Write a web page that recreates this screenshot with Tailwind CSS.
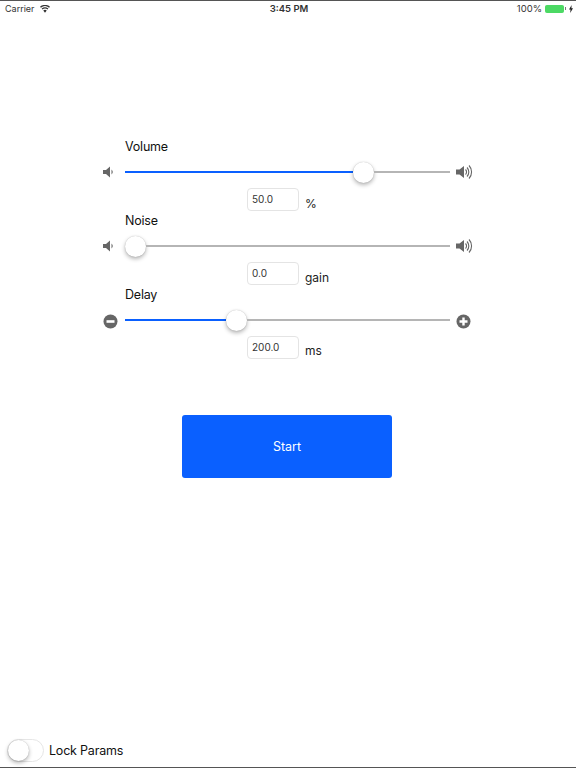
<!DOCTYPE html>
<html lang="en">
<head>
    <meta charset="UTF-8" />
    <meta content="width=device-width, initial-scale=1.0" name="viewport" />
    <title>Params</title>
    <script src="https://cdn.jsdelivr.net/npm/@tailwindcss/browser@4"></script>
</head>
<body class="bg-white text-black font-['Inter',sans-serif] overflow-hidden">
<div class="w-[576px] h-[768px] flex flex-col border-t border-b border-[#555]">
    <!-- status bar -->
    <div class="h-[15px] shrink-0 flex items-center justify-between pl-[5px] pr-[3px] text-[9px] leading-none text-[#333]">
        <div class="w-[180px] flex items-center gap-[5px]">
            <span>Carrier</span>
            <svg width="10" height="8" viewBox="0 0 11 8"><path d="M5.500 8 3.600 5.600a3 3 0 0 1 3.800 0zM2.700 4.600 1.800 3.500a5.800 5.800 0 0 1 7.400 0L8.300 4.600a4.400 4.400 0 0 0-5.600 0zM1 2.600 0 1.500a8.400 8.400 0 0 1 11 0L10 2.600a7 7 0 0 0-9 0z" fill="#333"/></svg>
        </div>
        <span class="font-semibold text-[9.500px]">3:45 PM</span>
        <div class="w-[180px] flex items-center justify-end gap-[2px]">
            <span class="text-[9.500px] mr-[1px]">100%</span>
            <div class="w-[19px] h-[8px] bg-[#4cd964] rounded-[1.500px] border border-[#4cd964]"></div>
            <div class="w-[1px] h-[3px] -ml-[1px] bg-[#777]"></div>
            <svg class="ml-[1px]" width="4" height="8" viewBox="0 0 4 8"><path d="M2.600 0 0 4.600h1.500L1.200 8 4 3.300H2.400z" fill="#222"/></svg>
        </div>
    </div>

    <!-- Volume -->
    <section class="mt-[121px]">
        <div class="h-[19px] pl-[125px] text-[12.500px] tracking-[-0.2px] leading-[19px] text-[#111]">Volume</div>
        <div class="h-[32px] flex items-center">
            <div class="w-[125px] pl-[103px] shrink-0">
                <svg width="12" height="12" viewBox="0 0 12 12"><path d="M0 4h3l4-3.500v11L3 8H0z M8.500 3.500a3.500 3.500 0 0 1 0 5z" fill="#666"/></svg>
            </div>
            <div class="w-[325px] flex items-center">
                <div class="w-[228px] h-[2px] bg-[#0a60ff]"></div>
                <div class="w-[21px] h-[21px] shrink-0 rounded-full bg-white shadow-[0_2px_4px_rgba(0,0,0,0.3),0_0_1px_rgba(0,0,0,0.25)]"></div>
                <div class="flex-1 h-[2px] bg-[#b5b5b5]"></div>
            </div>
            <svg class="ml-[5px]" width="18" height="16" viewBox="0 0 18 16"><path d="M1 5.500h3.500L9 2v12l-4.500-3.500H1z" fill="#666"/><path d="M10.500 5.500a3.500 3.500 0 0 1 0 5M12 3.500a6.500 6.500 0 0 1 0 9M14 1.500a9.500 9.500 0 0 1 0 13" fill="none" stroke="#666" stroke-width="1.100"/></svg>
        </div>
        <div class="h-[23px] flex pl-[247px]">
            <div class="w-[52px] h-[23px] border border-[#e4e4e4] rounded-[4px] pl-[4px] text-[10px] leading-[20px] text-[#333]">50.0</div>
            <span class="ml-[6px] mt-[8px] text-[12px] leading-[16px] text-[#222]">%</span>
        </div>
    </section>

    <!-- Noise -->
    <section>
        <div class="h-[19px] pl-[125px] text-[12.500px] tracking-[-0.2px] leading-[19px] text-[#111]">Noise</div>
        <div class="h-[32px] flex items-center">
            <div class="w-[125px] pl-[103px] shrink-0">
                <svg width="12" height="12" viewBox="0 0 12 12"><path d="M0 4h3l4-3.500v11L3 8H0z M8.500 3.500a3.500 3.500 0 0 1 0 5z" fill="#666"/></svg>
            </div>
            <div class="w-[325px] flex items-center">
                <div class="w-[21px] h-[21px] shrink-0 rounded-full bg-white shadow-[0_2px_4px_rgba(0,0,0,0.3),0_0_1px_rgba(0,0,0,0.25)]"></div>
                <div class="flex-1 h-[2px] bg-[#b5b5b5]"></div>
            </div>
            <svg class="ml-[5px]" width="18" height="16" viewBox="0 0 18 16"><path d="M1 5.500h3.500L9 2v12l-4.500-3.500H1z" fill="#666"/><path d="M10.500 5.500a3.500 3.500 0 0 1 0 5M12 3.500a6.500 6.500 0 0 1 0 9M14 1.500a9.500 9.500 0 0 1 0 13" fill="none" stroke="#666" stroke-width="1.100"/></svg>
        </div>
        <div class="h-[23px] flex pl-[247px]">
            <div class="w-[52px] h-[23px] border border-[#e4e4e4] rounded-[4px] pl-[4px] text-[10px] leading-[20px] text-[#333]">0.0</div>
            <span class="ml-[6px] mt-[8px] text-[12px] leading-[16px] text-[#222]">gain</span>
        </div>
    </section>

    <!-- Delay -->
    <section>
        <div class="h-[19px] pl-[125px] text-[12.500px] tracking-[-0.2px] leading-[19px] text-[#111]">Delay</div>
        <div class="h-[32px] flex items-center">
            <div class="w-[125px] pl-[103px] shrink-0">
                <svg class="mt-[2px]" width="15" height="15" viewBox="0 0 15 15"><circle cx="7.500" cy="7.500" r="7" fill="#666"/><rect x="3.500" y="6.200" width="8" height="2.600" fill="#fff"/></svg>
            </div>
            <div class="w-[325px] flex items-center">
                <div class="w-[101px] h-[2px] bg-[#0a60ff]"></div>
                <div class="w-[21px] h-[21px] shrink-0 rounded-full bg-white shadow-[0_2px_4px_rgba(0,0,0,0.3),0_0_1px_rgba(0,0,0,0.25)]"></div>
                <div class="flex-1 h-[2px] bg-[#b5b5b5]"></div>
            </div>
            <svg class="ml-[6px] mt-[2px]" width="15" height="15" viewBox="0 0 15 15"><circle cx="7.500" cy="7.500" r="7" fill="#666"/><path d="M3.500 6.300h2.800V3.500h2.400v2.800h2.800v2.400H8.700v2.800H6.300V8.700H3.500z" fill="#fff"/></svg>
        </div>
        <div class="h-[23px] flex pl-[247px]">
            <div class="w-[52px] h-[23px] border border-[#e4e4e4] rounded-[4px] pl-[4px] text-[10px] leading-[20px] text-[#333]">200.0</div>
            <span class="ml-[6px] mt-[7px] text-[12px] leading-[16px] text-[#222]">ms</span>
        </div>
    </section>

    <button class="mt-[56px] ml-[182px] w-[210px] h-[63px] pt-[2px] shrink-0 bg-[#0a60ff] rounded-[3px] text-white text-[12.500px]">Start</button>

    <!-- lock -->
    <div class="mt-auto mb-[5px] pl-[7px] flex items-center gap-[5px]">
        <div class="w-[37px] h-[23px] rounded-full border border-[#e6e6e6] bg-white">
            <div class="w-[21px] h-[21px] rounded-full bg-white shadow-[0_2px_4px_rgba(0,0,0,0.3),0_0_1px_rgba(0,0,0,0.25)]"></div>
        </div>
        <span class="text-[12.500px] tracking-[-0.2px] leading-[23px] text-[#111]">Lock Params</span>
    </div>
</div>
</body>
</html>
